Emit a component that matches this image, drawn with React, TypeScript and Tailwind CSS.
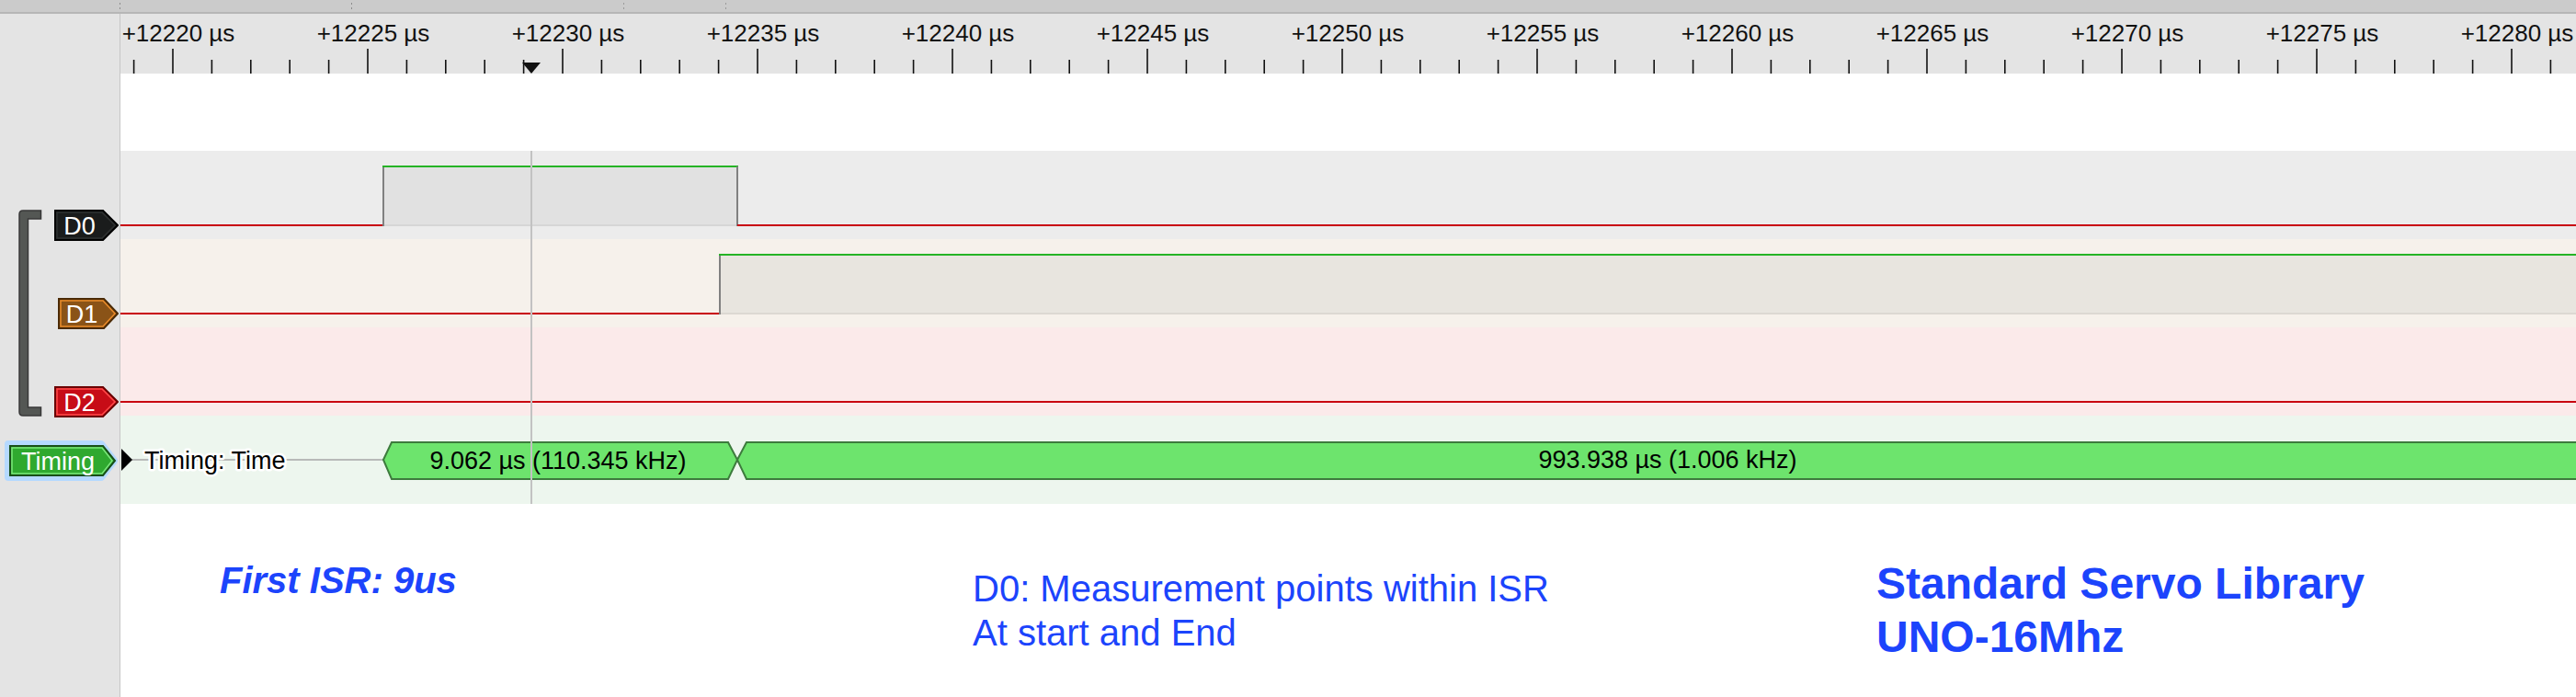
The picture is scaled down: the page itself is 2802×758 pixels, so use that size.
import React from 'react';

// Plot geometry (px inside the plot column, which starts right of the 131px sidebar)
const PLOT_W = 2671;
const PX_PER_US = 42.4;
const T0 = 12220;
const X0 = 57; // x of the +12220 µs tick
const tx = (t: number) => X0 + (t - T0) * PX_PER_US;

const CURSOR_X = 447;
const D0_RISE = 286;
const D0_FALL = 671;
const D1_RISE = 652;
const HIGH_Y = 17;
const LOW_Y = 81;

const RED = '#c8000f';
const GREEN = '#25b425';
const EDGE = '#808080';
const FONT = 'Liberation Sans, Arial, sans-serif';

interface TagProps {
  text: string;
  width: number;
  height: number;
  arrow: number;
  fill: string;
  outer: string;
  inner: string;
}

const ChannelTag: React.FC<TagProps> = ({ text, width, height, arrow, fill, outer, inner }) => {
  const w = width;
  const h = height;
  const body = w - arrow;
  return (
    <svg width={w} height={h} className="block">
      <polygon
        points={`1,1 ${body},1 ${w - 1},${h / 2} ${body},${h - 1} 1,${h - 1}`}
        fill={fill}
        stroke={outer}
        strokeWidth={2}
      />
      <polygon
        points={`3,3 ${body - 1},3 ${w - 4},${h / 2} ${body - 1},${h - 3} 3,${h - 3}`}
        fill="none"
        stroke={inner}
        strokeWidth={1.5}
      />
      <text x={body / 2 + 1} y={h - 7} textAnchor="middle" fontSize={27} fontFamily={FONT} fill="#ffffff">
        {text}
      </text>
    </svg>
  );
};

const TimingTag = () => (
  <svg width={124} height={44} className="block">
    {/* selection glow */}
    <polygon points="4,4 105,4 119,22 105,40 4,40" fill="#b5d9ff" stroke="#b5d9ff" strokeWidth={8} strokeLinejoin="round" />
    <polygon points="6,6 107,6 120,22 107,38 6,38" fill="#2fa92f" stroke="#184f18" strokeWidth={2} />
    <polygon points="8,8 106,8 117,22 106,36 8,36" fill="none" stroke="#7ae67a" strokeWidth={1.5} />
    <text x={58} y={32} textAnchor="middle" fontSize={27} fontFamily={FONT} fill="#ffffff">
      Timing
    </text>
  </svg>
);

const Bracket = () => (
  <svg width={26} height={225} className="block">
    <path
      d="M24.5,1 H5 Q1,1 1,5 V220 Q1,224 5,224 H24.5 V215 H10.5 V10 H24.5 Z"
      fill="#545754"
      stroke="#383838"
      strokeWidth={1.5}
    />
  </svg>
);

const Ruler = () => {
  const ticks: number[] = [];
  for (let t = 12219; t <= 12281; t++) ticks.push(t);
  const labels = ticks.filter((t) => t % 5 === 0);

  return (
    <svg width={PLOT_W} height={65} className="block">
      {ticks.map((t) => {
        const major = t % 5 === 0;
        const x = tx(t);
        return (
          <line key={t} x1={x} x2={x} y1={major ? 38 : 50} y2={65} stroke="#111111" strokeWidth={1.6} />
        );
      })}
      {labels.map((t) => (
        <text key={t} x={tx(t) + 6} y={30} textAnchor="middle" fontSize={26} fontFamily={FONT} fill="#111111">
          +{t} µs
        </text>
      ))}
      {/* cursor marker */}
      <polygon points={`${CURSOR_X - 10},53 ${CURSOR_X + 10},53 ${CURSOR_X},65`} fill="#111111" />
    </svg>
  );
};

const D0Wave = () => (
  <svg width={PLOT_W} height={96} className="block">
    <rect x={D0_RISE} y={HIGH_Y} width={D0_FALL - D0_RISE} height={LOW_Y - HIGH_Y} fill="#e1e1e1" />
    <line x1={D0_RISE} x2={D0_FALL} y1={LOW_Y} y2={LOW_Y} stroke="#d6d6d6" strokeWidth={2} />
    <line x1={0} x2={D0_RISE} y1={LOW_Y} y2={LOW_Y} stroke={RED} strokeWidth={2} />
    <line x1={D0_RISE} x2={D0_RISE} y1={LOW_Y + 1} y2={HIGH_Y} stroke={EDGE} strokeWidth={2} />
    <line x1={D0_RISE - 1} x2={D0_FALL + 1} y1={HIGH_Y} y2={HIGH_Y} stroke={GREEN} strokeWidth={2} />
    <line x1={D0_FALL} x2={D0_FALL} y1={HIGH_Y} y2={LOW_Y + 1} stroke={EDGE} strokeWidth={2} />
    <line x1={D0_FALL} x2={PLOT_W} y1={LOW_Y} y2={LOW_Y} stroke={RED} strokeWidth={2} />
  </svg>
);

const D1Wave = () => (
  <svg width={PLOT_W} height={96} className="block">
    <rect x={D1_RISE} y={HIGH_Y} width={PLOT_W - D1_RISE} height={LOW_Y - HIGH_Y} fill="#e8e5df" />
    <line x1={D1_RISE} x2={PLOT_W} y1={LOW_Y} y2={LOW_Y} stroke="#dcd8d2" strokeWidth={2} />
    <line x1={0} x2={D1_RISE} y1={LOW_Y} y2={LOW_Y} stroke={RED} strokeWidth={2} />
    <line x1={D1_RISE} x2={D1_RISE} y1={LOW_Y + 1} y2={HIGH_Y} stroke={EDGE} strokeWidth={2} />
    <line x1={D1_RISE - 1} x2={PLOT_W} y1={HIGH_Y} y2={HIGH_Y} stroke={GREEN} strokeWidth={2} />
  </svg>
);

const D2Wave = () => (
  <svg width={PLOT_W} height={96} className="block">
    <line x1={0} x2={PLOT_W} y1={LOW_Y} y2={LOW_Y} stroke={RED} strokeWidth={2} />
  </svg>
);

const TimingWave = () => (
  <svg width={PLOT_W} height={96} className="block">
    <line x1={12} x2={D0_RISE} y1={48} y2={48} stroke="#a6a6a6" strokeWidth={1.5} />
    <polygon points="1,36 13,48 1,60" fill="#000000" />
    <text
      x={26}
      y={58}
      fontSize={27}
      fontFamily={FONT}
      fill="#000000"
      stroke="#ffffff"
      strokeWidth={5}
      strokeLinejoin="round"
      paintOrder="stroke"
    >
      Timing: Time
    </text>
    <polygon
      points={`${D0_RISE},48 ${D0_RISE + 9},29 ${D0_FALL - 10},29 ${D0_FALL},48 ${D0_FALL - 10},69 ${D0_RISE + 9},69`}
      fill="#6de46d"
      stroke="#3d7b3d"
      strokeWidth={2}
    />
    <polygon
      points={`${D0_FALL},48 ${D0_FALL + 10},29 ${PLOT_W + 20},29 ${PLOT_W + 20},69 ${D0_FALL + 10},69`}
      fill="#6de46d"
      stroke="#3d7b3d"
      strokeWidth={2}
    />
    <text x={476} y={58} textAnchor="middle" fontSize={27} fontFamily={FONT} fill="#000000">
      9.062 µs (110.345 kHz)
    </text>
    <text x={1683} y={57} textAnchor="middle" fontSize={27} fontFamily={FONT} fill="#000000">
      993.938 µs (1.006 kHz)
    </text>
  </svg>
);

function App() {
  return (
    <div className="w-[2802px] h-[758px] flex flex-col bg-white overflow-hidden font-['Liberation_Sans',Arial,sans-serif]">
      {/* Top strip */}
      <div className="h-[15px] bg-[#cbcbcb] border-b-2 border-[#b6b6b6] flex items-center">
        <div className="ml-[130px] w-[1px] h-[7px] border-y-2 border-[#8c8c8c]" />
        <div className="ml-[251px] w-[1px] h-[7px] border-y-2 border-[#8c8c8c]" />
        <div className="ml-[295px] w-[1px] h-[7px] border-y-2 border-[#9a9a9a]" />
        <div className="ml-[110px] w-[1px] h-[7px] border-y-2 border-[#9a9a9a]" />
      </div>

      <div className="flex flex-1 min-h-0">
        {/* Channel sidebar */}
        <div className="w-[131px] shrink-0 bg-[#e4e4e4] border-r border-[#c6c6c6] flex flex-col">
          <div className="h-[149px]" />
          <div className="h-[288px] flex">
            <div className="ml-[20px] mt-[64px]">
              <Bracket />
            </div>
            <div className="flex-1 flex flex-col">
              <div className="h-[96px] flex justify-end items-start pt-[64px] pr-[1px]">
                <ChannelTag text="D0" width={70} height={34} arrow={17} fill="#1a1c1c" outer="#000000" inner="#2e3030" />
              </div>
              <div className="h-[96px] flex justify-end items-start pt-[64px] pr-[1px]">
                <ChannelTag text="D1" width={66} height={34} arrow={16} fill="#8a5317" outer="#4a2a06" inner="#e88a2a" />
              </div>
              <div className="h-[96px] flex justify-end items-start pt-[64px] pr-[1px]">
                <ChannelTag text="D2" width={70} height={34} arrow={17} fill="#c70c17" outer="#6a0000" inner="#ff4a4a" />
              </div>
            </div>
          </div>
          <div className="h-[96px] flex justify-end items-start pt-[27px] pr-[1px]">
            <TimingTag />
          </div>
        </div>

        {/* Plot column */}
        <div className="flex-1 min-w-0 flex flex-col">
          <div className="h-[65px] bg-[#e4e4e4]">
            <Ruler />
          </div>
          <div className="h-[84px] bg-white" />

          <div className="relative">
            <div className="h-[96px] bg-[#ececec]">
              <D0Wave />
            </div>
            <div className="h-[96px] bg-[#f6f1eb]">
              <D1Wave />
            </div>
            <div className="h-[96px] bg-[#fbeaea]">
              <D2Wave />
            </div>
            <div className="h-[96px] bg-[#edf6ee]">
              <TimingWave />
            </div>
            {/* cursor line */}
            <div className="absolute top-0 bottom-0 left-[446px] w-[2px] bg-[#c2c2c2]" />
          </div>

          {/* Notes */}
          <div className="flex-1 flex items-start text-[#1c44fc]">
            <div className="w-[927px] pl-[108px] pt-[63px] text-[40px] leading-[40px] font-bold italic">
              First ISR: 9us
            </div>
            <div className="w-[983px] pt-[68px] text-[40px] leading-[48px]">
              <div>D0: Measurement points within ISR</div>
              <div>At start and End</div>
            </div>
            <div className="pt-[58px] text-[48px] leading-[58px] font-bold">
              <div>Standard Servo Library</div>
              <div>UNO-16Mhz</div>
            </div>
          </div>
        </div>
      </div>
    </div>
  );
}

export default App;
